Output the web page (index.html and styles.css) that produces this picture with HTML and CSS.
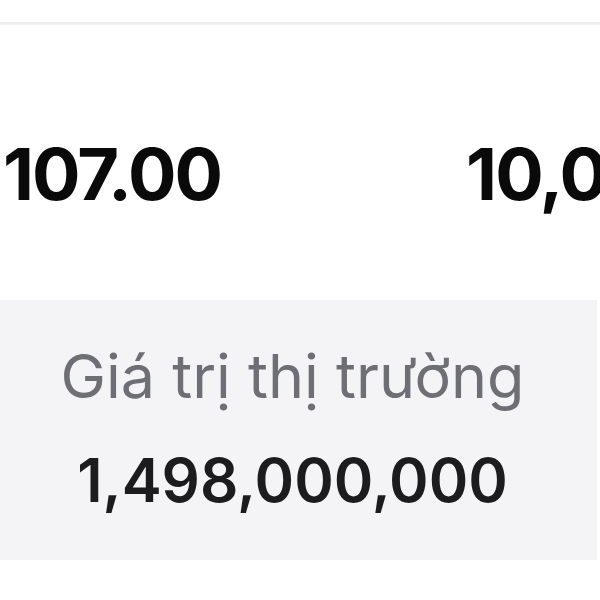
FILE: index.html
```html
<!DOCTYPE html>
<html lang="vi">
<head>
    <meta charset="UTF-8">
    <title>Giá trị thị trường</title>
    <link rel="stylesheet" href="styles.css">
</head>
<body>
<div class="header-space"></div>
<div class="divider"></div>

<div class="stats-row">
    <div class="stat-value">107.00</div>
    <div class="stat-value">10,000</div>
</div>

<div class="market-panel">
    <div class="market-label">Giá trị thị trường</div>
    <div class="market-value">1,498,000,000</div>
</div>
</body>
</html>
```

FILE: styles.css
```css
body {
    margin: 0;
    font-family: 'Inter', 'Roboto', sans-serif;
    background-color: #ffffff;
    overflow: hidden;
}
.header-space {
    height: 22px;
}
.divider {
    height: 3px;
    background-color: #f0f0f3;
}
.stats-row {
    display: flex;
    gap: 245px;
    padding: 113px 0 90px 3px;
    white-space: nowrap;
}
.stat-value {
    font-size: 72px;
    font-weight: 700;
    line-height: 1;
    letter-spacing: -2px;
    color: #0a0a0a;
}
.market-panel {
    width: 597px;
    height: 260px;
    box-sizing: border-box;
    padding: 46px 12px 0 0;
    background-color: #f4f4f7;
    text-align: center;
}
.market-label {
    font-size: 61px;
    font-weight: 400;
    line-height: 1;
    color: #6e6e75;
}
.market-value {
    margin-top: 43px;
    font-size: 60px;
    font-weight: 600;
    line-height: 1;
    color: #1c1c1e;
}
```
